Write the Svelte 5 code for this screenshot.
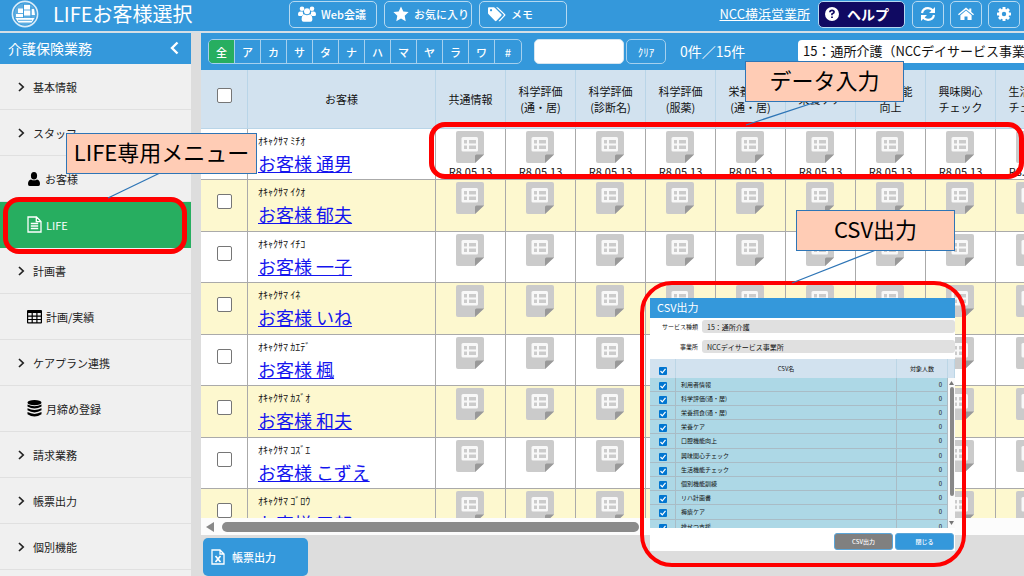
<script>
  const kana = ['全', 'ア', 'カ', 'サ', 'タ', 'ナ', 'ハ', 'マ', 'ヤ', 'ラ', 'ワ', '#'];
  const menu = [
    { label: '基本情報' },
    { label: 'スタッフ' },
    { label: 'お客様', icon: 'user' },
    { label: 'LIFE', icon: 'file', active: true },
    { label: '計画書' },
    { label: '計画/実績', icon: 'grid' },
    { label: 'ケアプラン連携' },
    { label: '月締め登録', icon: 'db' },
    { label: '請求業務' },
    { label: '帳票出力' },
    { label: '個別機能' }
  ];
  const columns = [
    ['共通情報'],
    ['科学評価', '(通・居)'],
    ['科学評価', '(診断名)'],
    ['科学評価', '(服薬)'],
    ['栄養摂食', '(通・居)'],
    ['栄養ケア'],
    ['口腔機能', '向上'],
    ['興味関心', 'チェック'],
    ['生活機能', 'チェック']
  ];
  const customers = [
    { ruby: 'ｵｷｬｸｻﾏ ﾐﾁｵ', name: 'お客様 通男', date: 'R8.05.13' },
    { ruby: 'ｵｷｬｸｻﾏ ｲｸｵ', name: 'お客様 郁夫' },
    { ruby: 'ｵｷｬｸｻﾏ ｲﾁｺ', name: 'お客様 一子' },
    { ruby: 'ｵｷｬｸｻﾏ ｲﾈ', name: 'お客様 いね' },
    { ruby: 'ｵｷｬｸｻﾏ ｶｴﾃﾞ', name: 'お客様 楓' },
    { ruby: 'ｵｷｬｸｻﾏ ｶｽﾞｵ', name: 'お客様 和夫' },
    { ruby: 'ｵｷｬｸｻﾏ ｺｽﾞｴ', name: 'お客様 こずえ' },
    { ruby: 'ｵｷｬｸｻﾏ ｺﾞﾛｳ', name: 'お客様 五郎' }
  ];
  const csvRows = [
    '利用者情報', '科学評価(通・居)', '栄養摂食(通・居)', '栄養ケア', '口腔機能向上', '興味関心チェック',
    '生活機能チェック', '個別機能訓練', 'リハ計画書', '褥瘡ケア', '排せつ支援'
  ];
</script>

<div class="page">
  <header class="top">
    <svg class="logo" viewBox="0 0 28 28" aria-hidden="true">
      <circle cx="14" cy="14" r="12.6" fill="none" stroke="#d8ebf8" stroke-width="1.6" />
      <circle cx="14" cy="14" r="10.8" fill="#5fadE0" />
      <path d="M7 8.500h5V13H7zM13 5h6v4.500h-6zM13 10.500h6.500v5H13zM20.500 9h2.500l1 6h-3.500zM5 14h7v3H5z" fill="#fff" />
      <path d="M4.500 18h19l-2.800 4.500H7.500z" fill="#fff" />
      <path d="M12.500 4v14M20 7v11M7 20.300h14" fill="none" stroke="#3498db" stroke-width=".8" />
    </svg>
    <h1>LIFEお客様選択</h1>
    <nav class="tools" aria-label="ツール">
      <button class="tool">
        <svg width="18" height="16" viewBox="0 0 18 16" fill="#fff" aria-hidden="true">
          <circle cx="4" cy="2.8" r="2.3" /><circle cx="14" cy="2.8" r="2.3" /><circle cx="9" cy="5.2" r="3" />
          <path d="M0 8.5Q0 5.4 2.4 5.4h2.4Q4.6 8 6.2 8.8 4.2 9.2 3.8 10H1.4Q0 10 0 8.5zM18 8.5q0-3.1-2.4-3.1h-2.4q.2 2.6-1.4 3.4 2 .4 2.4 1.2h2.4Q18 10 18 8.5z" />
          <path d="M3.6 13.500q0-4.800 3-5 2.400 1.600 4.800 0 3 .2 3 5 0 2.300-2 2.300H5.600q-2 0-2-2.300z" />
        </svg>
        <span>Web会議</span>
      </button>
      <button class="tool">
        <svg width="16" height="16" viewBox="0 0 16 16" fill="#fff" aria-hidden="true">
          <path d="M8 .5l2.3 4.900 5.300.7-3.900 3.700 1 5.400L8 12.600l-4.700 2.600 1-5.400L.4 6.100l5.300-.7z" />
        </svg>
        <span>お気に入り</span>
      </button>
      <button class="tool">
        <svg width="18" height="15" viewBox="0 0 18 15" fill="#fff" aria-hidden="true">
          <path fill-rule="evenodd" d="M0 1.200Q0 .3.900.3h4.800q.7 0 1.300.6l6.300 6.300q.8.800 0 1.600l-4.800 5q-.8.800-1.600 0L.6 7.300Q0 6.700 0 6zM3 2.100a1.100 1.100 0 1 0 .1 0z" />
          <path d="M8 .3h1.300q.7 0 1.300.6l6.500 6.300q.8.800 0 1.600l-4.900 5.100q-.8.800-1.700.1l5-5.300q.7-.8-.1-1.500z" />
        </svg>
        <span>メモ</span>
      </button>
    </nav>
    <a class="office" href="#office">NCC横浜営業所</a>
    <button class="help">
      <svg width="14" height="14" viewBox="0 0 14 14" aria-hidden="true">
        <circle cx="7" cy="7" r="7" fill="#fff" />
        <path d="M4.900 5.300Q5 3.300 7 3.300t2.100 1.700Q9.100 6.100 7 7v1.300" fill="none" stroke="#100a62" stroke-width="1.700" />
        <path d="M6.100 9.400h1.800v1.700H6.100z" fill="#100a62" />
      </svg>
      <span>ヘルプ</span>
    </button>
    <button class="square" aria-label="更新">
      <svg width="16" height="16" viewBox="0 0 16 16" aria-hidden="true">
        <path d="M2 7Q3 2.200 8 2.200q3 0 4.800 2.300M14 9q-1 4.800-6 4.800-3 0-4.800-2.300" fill="none" stroke="#fff" stroke-width="2.200" />
        <path d="M15 1v6H9zM1 15V9h6z" fill="#fff" />
      </svg>
    </button>
    <button class="square" aria-label="ホーム">
      <svg width="16" height="14" viewBox="0 0 16 14" fill="#fff" aria-hidden="true">
        <path d="M8 .5l3.300 2.800V1.500h2v3.500L16 7.300l-.9 1L8 2.400.9 8.300l-.9-1z" />
        <path d="M8 3.600l5.600 4.700V13H9.500V9.500h-3V13H2.400V8.300z" />
      </svg>
    </button>
    <button class="square" aria-label="設定">
      <svg width="14" height="14" viewBox="-7 -7 14 14" aria-hidden="true">
        <g fill="#fff">
          <rect x="-1.500" y="-7" width="3" height="14" rx=".5" />
          <rect x="-1.500" y="-7" width="3" height="14" rx=".5" transform="rotate(45)" />
          <rect x="-1.500" y="-7" width="3" height="14" rx=".5" transform="rotate(90)" />
          <rect x="-1.500" y="-7" width="3" height="14" rx=".5" transform="rotate(135)" />
          <circle r="5.200" />
        </g>
        <circle r="2.200" fill="#3498db" />
      </svg>
    </button>
  </header>

  <div class="body">
    <aside>
      <div class="side-head">
        <h2>介護保険業務</h2>
        <button aria-label="メニューを閉じる">
          <svg width="9" height="14" viewBox="0 0 9 14" aria-hidden="true"><path d="M7.500 1.500L2 7l5.500 5.500" fill="none" stroke="#fff" stroke-width="2.400" /></svg>
        </button>
      </div>
      <ul>
        {#each menu as m}
          <li>
            <a href="#menu" class:sub={m.icon} class:active={m.active}>
              {#if m.icon === 'user'}
                <svg width="14" height="14" viewBox="0 0 14 14" aria-hidden="true"><ellipse cx="7" cy="3.800" rx="3.100" ry="3.800" /><path d="M1 12Q1 8 4 7.400q3 1.800 6 0 3 .6 3 4.600 0 2-1.600 2H2.600Q1 14 1 12z" /></svg>
              {:else if m.icon === 'file'}
                <svg width="15" height="17" viewBox="0 0 15 17" fill="none" stroke="#fff" stroke-width="1.300" aria-hidden="true"><path d="M1 1h8.500L14 5.500V16H1zM9.300 1v4.700H14M3.800 7.500h7.400M3.800 10h7.400M3.800 12.500h7.400" /></svg>
              {:else if m.icon === 'grid'}
                <svg width="15" height="14" viewBox="0 0 15 14" aria-hidden="true"><path fill-rule="evenodd" d="M1 0h13q1 0 1 1v11.500q0 1-1 1H1q-1 0-1-1V1q0-1 1-1zM1.200 3v2.600h3.400V3zM5.800 3v2.600h3.500V3zM10.500 3v2.600h3.300V3zM1.200 6.700v2.200h3.400V6.700zM5.800 6.700v2.200h3.500V6.700zM10.500 6.700v2.200h3.300V6.700zM1.200 10v2.300h3.400V10zM5.800 10v2.300h3.500V10zM10.500 10v2.300h3.300V10z" /></svg>
              {:else if m.icon === 'db'}
                <svg width="15" height="17" viewBox="0 0 15 17" aria-hidden="true"><ellipse cx="7.500" cy="2.700" rx="7" ry="2.600" /><path d="M.5 4.500q7 3.600 14 0v2q-7 4.200-14 0zM.5 8.300q7 3.600 14 0v2q-7 4.200-14 0zM.5 12.100q7 3.600 14 0v2.200q-7 4.600-14 0z" /></svg>
              {:else}
                <svg width="7" height="10" viewBox="0 0 7 10" aria-hidden="true"><path d="M1 1l4.200 4L1 9" fill="none" stroke="#222" stroke-width="1.700" /></svg>
              {/if}
              <span>{m.label}</span>
            </a>
          </li>
        {/each}
      </ul>
    </aside>

    <main>
      <div class="filter">
        <div class="kana">
          {#each kana as k, i}<button class:on={i === 0}>{k}</button>{/each}
        </div>
        <input class="search" type="text" aria-label="検索" />
        <button class="clear">ｸﾘｱ</button>
        <span class="count">0件／15件</span>
        <select aria-label="サービス事業所"><option>15：通所介護（NCCデイサービス事業所）</option></select>
      </div>

      <div class="list">
        <table class="customers">
          <colgroup><col class="c-check" /><col class="c-name" />{#each columns as _}<col class="c-data" />{/each}</colgroup>
          <thead>
            <tr>
              <th class="check"><input type="checkbox" aria-label="全て選択" /></th>
              <th>お客様</th>
              {#each columns as c}
                <th>{#each c as line}<div>{line}</div>{/each}</th>
              {/each}
            </tr>
          </thead>
          <tbody>
            {#each customers as p}
              <tr>
                <td class="check"><input type="checkbox" aria-label={p.name} /></td>
                <td class="name"><div class="ruby">{p.ruby}</div><a href="#customer">{p.name}</a></td>
                {#each columns as _}
                  <td class="data">
                    <svg width="28" height="32" viewBox="0 0 28 32" aria-hidden="true">
                      <path d="M2 0h24q2 0 2 2v21.500L19 32H2q-2 0-2-2V2q0-2 2-2z" fill="#cbcbcb" />
                      <path d="M28 23.500L19 32v-7q0-1.500 1.500-1.500z" fill="#999" />
                      <rect x="5.500" y="6" width="16.500" height="14.500" rx="1.500" fill="#f8f8f8" />
                      <path d="M8 9h3v3.500H8zM13 9h7v3.500h-7zM8 14.500h3V18H8zM13 14.500h7V18h-7z" fill="#cbcbcb" />
                    </svg>
                    {#if p.date}<div>{p.date}</div>{/if}
                  </td>
                {/each}
              </tr>
            {/each}
          </tbody>
        </table>
      </div>
      <div class="hscroll" aria-hidden="true">
        <svg width="8" height="10" viewBox="0 0 8 10"><path d="M8 0v10L0 5z" fill="#888" /></svg>
        <div class="thumb"></div>
      </div>
      <footer>
        <button>
          <svg width="14" height="16" viewBox="0 0 14 16" fill="none" stroke="#fff" stroke-width="1.300" aria-hidden="true"><path d="M1 1h8l4 4v10H1zM9 1v4h4" /><path d="M4.500 7l5 6M9.500 7l-5 6" stroke-width="1.700" /></svg>
          <span>帳票出力</span>
        </button>
      </footer>
    </main>
  </div>

  <section class="dialog" role="dialog" aria-label="CSV出力">
    <h2>CSV出力</h2>
    <div class="form">
      <label for="svc">サービス種類</label><input id="svc" type="text" readonly value="15：通所介護" />
      <label for="ofc">事業所</label><input id="ofc" type="text" readonly value="NCCデイサービス事業所" />
    </div>
    <div class="csv-head">
      <div><input type="checkbox" checked aria-label="全て選択" /></div>
      <div>CSV名</div>
      <div>対象人数</div>
      <div></div>
    </div>
    <div class="csv-body">
      <table>
        <colgroup><col class="v-check" /><col /><col class="v-count" /></colgroup>
        <tbody>
          {#each csvRows as r}
            <tr>
              <td class="vc"><input type="checkbox" checked aria-label={r} /></td>
              <td class="vn">{r}</td>
              <td class="vv">0</td>
            </tr>
          {/each}
        </tbody>
      </table>
      <div class="vscroll" aria-hidden="true">
        <svg width="5" height="4" viewBox="0 0 5 4"><path d="M0 4h5L2.500 0z" fill="#777" /></svg>
        <div class="vthumb"></div>
        <svg width="5" height="4" viewBox="0 0 5 4"><path d="M0 0h5L2.500 4z" fill="#777" /></svg>
      </div>
    </div>
    <div class="actions"><button class="grey">CSV出力</button><button>閉じる</button></div>
  </section>

  <div class="ring ring-life"></div>
  <div class="ring ring-data"></div>
  <div class="ring ring-csv"></div>
  <svg class="leaders" width="1024" height="576" fill="none" stroke="#2e75b6" stroke-width="1.300" aria-hidden="true">
    <path d="M162 172L108 198M819 101L746 125M876 250L792 283" />
  </svg>
  <div class="note note-life">LIFE専用メニュー</div>
  <div class="note note-data">データ入力</div>
  <div class="note note-csv">CSV出力</div>
</div>

<style>
  :global(body) { margin: 0; }
  .page, .page * { box-sizing: border-box; }
  .page {
    position: relative;
    height: 100vh;
    overflow: hidden;
    display: flex;
    flex-direction: column;
    background: #ddd;
    color: #111;
    font-family: "Noto Sans CJK JP", sans-serif;
    font-size: 11px;
    line-height: 16px;
  }
  button, input, select { font: inherit; margin: 0; padding: 0; color: inherit; }
  button { border: 0; background: none; display: flex; align-items: center; justify-content: center; }
  svg { display: block; flex: none; }
  h1, h2, ul { margin: 0; padding: 0; font-weight: 400; }

  .top {
    display: flex;
    align-items: center;
    height: 33px;
    padding: 0 4px 3px 11px;
    background: #3498db;
    border-bottom: 2px solid #d5dfe6;
    color: #fff;
    flex: none;
  }
  .logo { width: 28px; height: 28px; }
  h1 { margin-left: 14px; width: 236px; font-size: 20px; line-height: 28px; white-space: nowrap; }
  .tools { display: flex; gap: 7px; }
  .tool, .square, .help { height: 27px; border: 1px solid #b5d9f1; border-radius: 5px; }
  .tool { width: 88px; padding-left: 8px; gap: 5px; justify-content: flex-start; white-space: nowrap; }
  .tool span { font-weight: 500; }
  .office { margin-left: auto; margin-right: 8px; color: #fff; font-size: 13px; text-decoration: underline; white-space: nowrap; }
  .help { width: 87px; gap: 8px; background: #100a62; font-size: 14px; font-weight: 700; margin-right: 7px; justify-content: flex-start; padding-left: 6px; white-space: nowrap; }
  .square { width: 32px; }
  .square + .square { margin-left: 6px; }

  .body { flex: 1; min-height: 0; display: flex; }
  aside { width: 191px; flex: none; margin-right: 10px; background: #f0f0f0; overflow: hidden; }
  .side-head { display: flex; align-items: center; justify-content: space-between; height: 31px; padding: 0 12px 2px 8px; background: #3498db; color: #fff; }
  .side-head h2 { font-size: 14px; }
  ul { list-style: none; }
  li a { display: flex; align-items: center; gap: 8px; height: 46px; padding-left: 18px; border-bottom: 1px solid #e0e0e0; color: #222; text-decoration: none; }
  li .sub { padding-left: 27px; gap: 4px; }
  li .active { background: #27ae60; color: #fff; border-color: #27ae60; }

  main { flex: 1; min-width: 0; display: flex; flex-direction: column; }
  .filter { display: flex; align-items: center; height: 37px; flex: none; padding-left: 7px; background: #3498db; color: #fff; overflow: hidden; }
  .kana { display: flex; flex: none; border: 1px solid #a5d0ee; border-radius: 5px; overflow: hidden; }
  .kana button { width: 26px; height: 23px; border-right: 1px solid #a5d0ee; font-weight: 500; }
  .kana button:last-child { border-right: 0; }
  .kana .on { background: #27ae60; }
  .search { width: 90px; height: 25px; margin-left: 12px; flex: none; background: #fff; border: 1px solid #d5e5f0; border-radius: 5px; }
  .clear { width: 40px; height: 25px; margin-left: 2px; flex: none; border: 1px solid #a5d0ee; border-radius: 5px; }
  .count { width: 118px; margin-left: 14px; padding-bottom: 2px; flex: none; font-size: 14px; white-space: nowrap; }
  select { appearance: none; flex: none; width: 270px; height: 23px; padding: 0 5px 2px; border: 0; border-radius: 4px; background: #fff; color: #111; font-size: 13px; }

  .list { flex: 1; min-height: 0; overflow: hidden; }
  .customers { table-layout: fixed; width: 865px; border-collapse: separate; border-spacing: 0; }
  .c-check { width: 47px; }
  .c-name { width: 188px; }
  .c-data { width: 70px; }
  th { height: 59px; padding: 0; background: #d2e2ef; border-right: 1px solid #b9d5e8; border-bottom: 1px solid #b9d5e8; font-weight: 400; }
  td { padding: 0; vertical-align: top; border-right: 1px solid #aaa; border-bottom: 1px solid #aaa; }
  .customers tbody tr { height: 51px; background: #fff; }
  .customers tbody tr:nth-child(even) { height: 52px; background: #fdf8cf; }
  .check input { appearance: none; display: block; width: 15px; height: 15px; margin: 14px auto 0; background: #fff; border: 1px solid #767676; border-radius: 2px; }
  th.check input { margin: 0 auto 8px; }
  td.name { padding: 3px 0 0 10px; }
  .ruby { font-size: 10px; line-height: 18px; }
  .name a { display: block; font-size: 18px; line-height: 26px; color: #1414ee; text-decoration: underline; }
  .data { text-align: center; white-space: nowrap; }
  .data svg { margin: 2px auto 0 20px; }
  .data div { line-height: 16px; }
  .hscroll { display: flex; align-items: center; gap: 8px; height: 17px; flex: none; padding-left: 5px; background: #fcfcfc; }
  .thumb { width: 51%; height: 10px; border-radius: 5px; background: #8a8a8a; }
  footer { flex: none; height: 41px; padding: 3px 0 0 2px; }
  footer button { width: 105px; height: 38px; gap: 7px; padding-left: 8px; justify-content: flex-start; background: #3498db; color: #fff; border-radius: 5px; font-weight: 500; }

  .dialog { position: absolute; left: 650px; top: 298px; width: 305px; background: #fff; font-size: 6px; line-height: 8px; }
  .dialog h2 { height: 20px; padding-left: 7px; background: #3498db; color: #fff; font-size: 11px; line-height: 19px; }
  .form { display: grid; grid-template-columns: 48px 1fr; align-items: center; gap: 7px 4px; padding: 2px 0 6px; }
  .form label { text-align: right; }
  .form input { width: 100%; height: 13px; padding: 0 5px; border: 0; border-radius: 3px; background: #e0e0e0; font-size: 7px; }
  .csv-head { display: grid; grid-template-columns: 26px 1fr 51px 7px; height: 19px; background: #d2e2ef; }
  .csv-head div { display: flex; align-items: center; justify-content: center; border-right: 1px solid #bcd6e6; }
  .csv-head div:first-child { align-items: flex-end; padding-bottom: 3px; }
  .csv-body { display: flex; height: 150px; overflow: hidden; }
  .csv-body table { flex: 1; table-layout: fixed; width: 100%; border-collapse: separate; border-spacing: 0; background: #add8e6; align-self: flex-start; }
  .v-check { width: 26px; }
  .v-count { width: 51px; }
  .csv-body tr { height: 14px; }
  .csv-body tr:nth-child(5n) { height: 15px; }
  .csv-body td { border-color: #a9bcc6; vertical-align: middle; }
  .csv-body .vn { padding-left: 5px; }
  .csv-body .vv { padding-right: 5px; text-align: right; }
  .dialog input[type="checkbox"] {
    appearance: none;
    display: block;
    width: 8px;
    height: 8px;
    border-radius: 1px;
    background: #0075d0 url('data:image/svg+xml,<svg xmlns="http://www.w3.org/2000/svg" viewBox="0 0 8 8"><path d="M1.500 4l1.800 1.900 3.200-4" fill="none" stroke="white" stroke-width="1.200"/></svg>') center / 8px 8px no-repeat;
  }
  .dialog .vc input { margin: 2px auto 0; }
  .vscroll { width: 7px; display: flex; flex-direction: column; align-items: center; gap: 2px; padding: 3px 0; background: #fafafa; }
  .vthumb { width: 4px; height: 109px; border-radius: 2px; background: #888; margin-bottom: auto; }
  .actions { display: flex; justify-content: flex-end; gap: 2px; height: 23px; padding: 5px 1px 0 0; }
  .actions button { width: 59px; height: 17px; border: 1px solid #5aa5d8; border-radius: 3px; background: #3498db; color: #fff; font-weight: 500; }
  .actions .grey { background: #808080; }

  .ring { position: absolute; border: 5px solid #f00; pointer-events: none; }
  .ring-life { left: 3px; top: 197px; width: 184px; height: 57px; border-radius: 16px; }
  .ring-data { left: 429px; top: 122px; width: 595px; height: 57px; border-radius: 16px; }
  .ring-csv { left: 640px; top: 281px; width: 326px; height: 286px; border-width: 4px; border-radius: 32px; }
  .leaders { position: absolute; left: 0; top: 0; pointer-events: none; }
  .note { position: absolute; display: flex; align-items: center; justify-content: center; height: 41px; padding-bottom: 6px; background: #ffccb5; border: 1px solid #2e75b6; color: #000; font-size: 22px; line-height: 32px; white-space: nowrap; }
  .note-life { left: 66px; top: 133px; width: 191px; }
  .note-data { left: 745px; top: 61px; width: 159px; }
  .note-csv { left: 796px; top: 210px; width: 159px; }
</style>
